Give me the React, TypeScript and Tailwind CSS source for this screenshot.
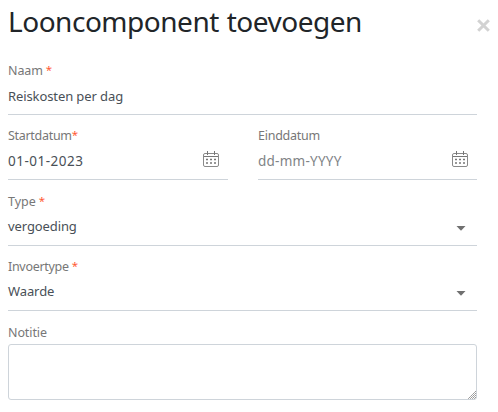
import type { ReactNode } from 'react';

function CalendarIcon() {
  return (
    <svg width="16" height="16" viewBox="0 0 16 16" fill="none" stroke="#8a8a8a" className="mb-[4px] shrink-0">
      <rect x="0.5" y="2.5" width="15" height="13" rx="1.5" />
      <path d="M1 5.5H15" stroke="#777" />
      <path d="M4.5 0V4M11.5 0V4" stroke="#777" />
      <path d="M3 8.5h2M7 8.5h2M11 8.5h2M3 12h2M7 12h2M11 12h2" stroke="#777" strokeWidth="1.3" />
    </svg>
  );
}

function Caret() {
  return (
    <svg width="10" height="5" viewBox="0 0 10 5" className="mr-[11px] mt-[3px] shrink-0">
      <path d="M0.5 0H9.5L5 4.8Z" fill="#707070" />
    </svg>
  );
}

function ResizeGrip() {
  return (
    <svg width="8" height="8" viewBox="0 0 8 8" className="pointer-events-none absolute bottom-px right-px" shapeRendering="crispEdges">
      <path d="M7 0h1v1h-1zM5 2h1v1h-1zM3 4h1v1h-1zM1 6h1v1h-1zM7 2h1v1h-1zM5 4h1v1h-1zM3 6h1v1h-1zM7 4h1v1h-1zM5 6h1v1h-1zM7 6h1v1h-1z" fill="#999" />
      <path d="M6 1h1v1h-1zM4 3h1v1h-1zM2 5h1v1h-1zM0 7h1v1h-1zM6 3h1v1h-1zM4 5h1v1h-1zM2 7h1v1h-1zM6 5h1v1h-1zM4 7h1v1h-1zM6 7h1v1h-1z" fill="#aaa" />
    </svg>
  );
}

interface FieldProps {
  label: string;
  mark?: string;
  value: string;
  labelClass?: string;
  valueClass?: string;
  className?: string;
  children?: ReactNode;
}

function Field({ label, mark, value, labelClass = '', valueClass = 'tracking-[-0.1px]', className = '', children }: FieldProps) {
  return (
    <div className={`flex flex-col border-b border-[#ced4da] ${className}`}>
      <div className="flex h-5 whitespace-pre text-[12.5px] leading-5 text-[#777]">
        <span className={labelClass}>{label}</span>
        {mark && <span className="text-[11.5px] leading-[18px] text-[#ff5a36]">{mark}</span>}
      </div>
      <div className="mt-[5px] flex h-5 items-center justify-between text-[13px] leading-5 text-[#495057]">
        <span className={valueClass}>{value}</span>
        {children}
      </div>
    </div>
  );
}

export default function App() {
  return (
    <div className="h-[412px] w-[498px] overflow-hidden bg-white pl-2 font-['Noto_Sans',sans-serif]">
      <header className="flex h-[61px] items-start justify-between pr-2">
        <h1 className="whitespace-nowrap text-[28px] leading-[43px] tracking-[-0.48px] text-[#212529] [word-spacing:1px]">
          Looncomponent toevoegen
        </h1>
        <svg width="13" height="13" viewBox="0 0 13 13" className="mt-[19px]" aria-label="Sluiten">
          <path d="M1.2 1.2L11.8 11.8M11.8 1.2L1.2 11.8" stroke="#d2d2d2" strokeWidth="3" />
        </svg>
      </header>
      <form className="w-[469px]">
        <Field label="Naam" mark=" *" value="Reiskosten per dag" labelClass="tracking-[-0.1px]" className="h-[54px]" />
        <div className="mt-[11px] flex gap-[30px]">
          <Field label="Startdatum" mark="*" value="01-01-2023" labelClass="tracking-[-0.3px]" className="h-[54px] w-[220px] pr-[9px]" valueClass="text-[13.5px] tracking-[0.5px]">
            <CalendarIcon />
          </Field>
          <Field label="Einddatum" value="dd-mm-YYYY" labelClass="tracking-[-0.25px]" className="h-[54px] w-[219px] pr-[9px]" valueClass="text-[13.5px] tracking-[0.25px] text-[#808386]">
            <CalendarIcon />
          </Field>
        </div>
        <Field label="Type" mark=" *" value="vergoeding" className="mt-3 h-[54px]" valueClass="-mt-0.5 tracking-[-0.1px]">
          <Caret />
        </Field>
        <Field label="Invoertype" mark=" *" value="Waarde" labelClass="tracking-[-0.3px]" className="mt-[11px] h-[54px]" valueClass="-mt-0.5 tracking-[-0.1px]">
          <Caret />
        </Field>
        <label className="mt-[11px] block h-[22px] pt-px text-[12.5px] leading-5 tracking-[-0.1px] text-[#777]">Notitie</label>
        <div className="relative">
          <textarea className="block h-14 w-full resize-none rounded-[3px] border border-[#ced4da] outline-none" />
          <ResizeGrip />
        </div>
      </form>
    </div>
  );
}
